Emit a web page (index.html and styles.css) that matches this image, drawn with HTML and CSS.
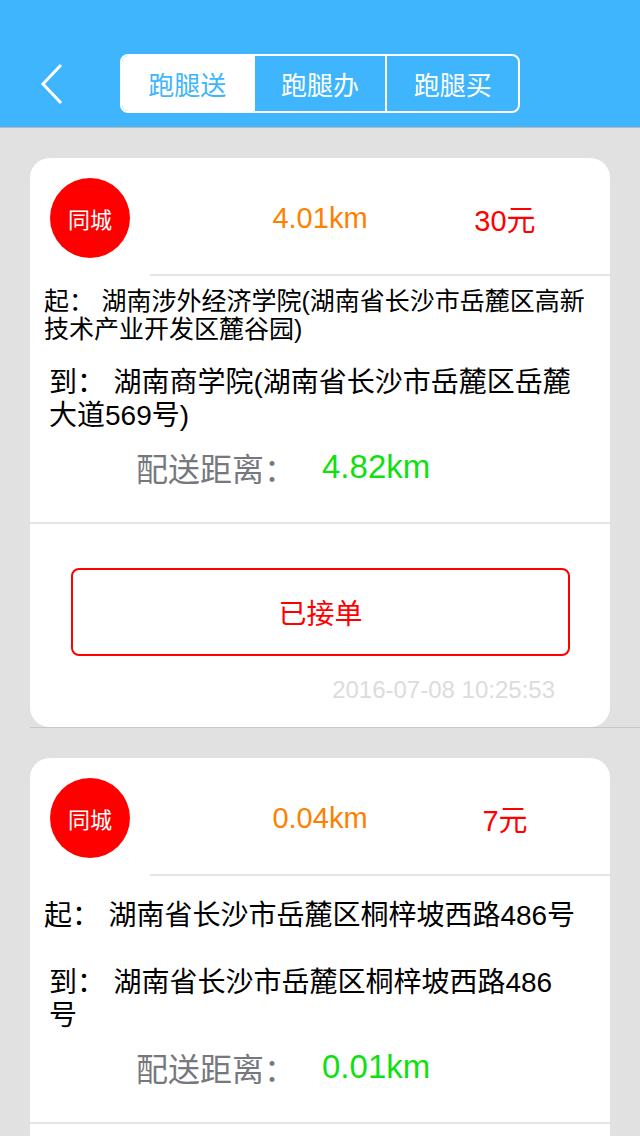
FILE: index.html
```html
<!DOCTYPE html>
<html lang="zh-CN">
<head>
<meta charset="utf-8">
<title>跑腿送</title>
<link rel="stylesheet" href="styles.css">
</head>
<body>
<header class="nav">
  <div class="nav-left">
    <svg class="back" width="24" height="42" viewBox="0 0 24 42"><path d="M21 2 L3 21 L21 40" fill="none" stroke="#fff" stroke-width="3"/></svg>
  </div>
  <div class="seg">
    <div class="seg-item active">跑腿送</div>
    <div class="seg-item">跑腿办</div>
    <div class="seg-item">跑腿买</div>
  </div>
  <div></div>
</header>

<main class="list">
  <section class="cell">
    <div class="card">
      <div class="top">
        <div class="badge">同城</div>
        <div class="dist">4.01km</div>
        <div class="price">30元</div>
      </div>
      <div class="rule-short"></div>
      <div class="row row-from">
        <p class="addr from small"><span class="lbl">起：</span>湖南涉外经济学院(湖南省长沙市岳麓区高新技术产业开发区麓谷园)</p>
      </div>
      <div class="row row-to">
        <p class="addr to"><span class="lbl">到：</span>湖南商学院(湖南省长沙市岳麓区岳麓大道569号)</p>
      </div>
      <div class="row row-km">
        <span class="km-lbl">配送距离：</span><span class="km-val">4.82km</span>
      </div>
      <div class="rule-full"></div>
      <div class="btn">已接单</div>
      <div class="time">2016-07-08 10:25:53</div>
    </div>
  </section>

  <section class="cell">
    <div class="card">
      <div class="top">
        <div class="badge">同城</div>
        <div class="dist">0.04km</div>
        <div class="price">7元</div>
      </div>
      <div class="rule-short"></div>
      <div class="row row-from">
        <p class="addr from"><span class="lbl">起：</span>湖南省长沙市岳麓区桐梓坡西路486号</p>
      </div>
      <div class="row row-to">
        <p class="addr to"><span class="lbl">到：</span>湖南省长沙市岳麓区桐梓坡西路486号</p>
      </div>
      <div class="row row-km">
        <span class="km-lbl">配送距离：</span><span class="km-val">0.01km</span>
      </div>
      <div class="rule-full"></div>
      <div class="btn">已接单</div>
      <div class="time">2016-07-08 10:25:53</div>
    </div>
  </section>
</main>
</body>
</html>
```
FILE: styles.css
```css
* { box-sizing: border-box; }
html, body { margin: 0; padding: 0; }
body {
  width: 640px;
  background: #e1e1e1;
  font-family: "Liberation Sans", "Noto Sans CJK SC", sans-serif;
  color: #000;
  overflow: hidden;
}

.nav {
  height: 128px;
  padding-top: 40px;
  background: #3eb5fd;
  border-bottom: 1px solid #b9b9b9;
  display: grid;
  grid-template-columns: 120px 400px 120px;
  align-items: center;
}
.nav-left { padding-left: 40px; display: flex; align-items: center; }
.back { display: block; }

.seg {
  height: 59px;
  border: 2px solid #fff;
  border-radius: 8px;
  display: flex;
  overflow: hidden;
}
.seg-item {
  flex: 1;
  display: flex;
  align-items: center;
  justify-content: center;
  font-size: 26px;
  color: #fff;
  border-left: 2px solid #fff;
}
.seg-item:first-child { border-left: none; }
.seg-item.active { background: #fff; color: #3eb5fd; }

.list { display: flex; flex-direction: column; }
.cell {
  margin-left: 30px;
  padding-top: 30px;
  border-bottom: 1px solid #c8c8c8;
}
.card {
  margin-right: 30px;
  background: #fff;
  border-radius: 20px;
  padding-bottom: 23px;
}

.top {
  display: flex;
  align-items: center;
  padding: 20px 0 16px 20px;
}
.badge {
  width: 80px;
  height: 80px;
  border-radius: 50%;
  background: #ff0000;
  color: #fff;
  font-size: 22px;
  display: flex;
  align-items: center;
  justify-content: center;
}
.dist {
  width: 180px;
  margin-left: 100px;
  text-align: center;
  font-size: 29px;
  color: #ff8000;
}
.price {
  width: 190px;
  text-align: center;
  font-size: 29px;
  color: #ff0000;
}
.rule-short { height: 2px; margin-left: 120px; background: #e4e4e4; }
.rule-full { height: 2px; background: #e4e4e4; margin-top: 32px; }

.row { display: flex; align-items: center; }
.row-from { height: 78px; }
.row-to { height: 90px; }
.row-km { height: 46px; padding-left: 106px; }

.addr {
  margin: 0;
  font-size: 28px;
  line-height: 33px;
}
.addr .lbl { margin-right: 0.3em; }
.addr.from { padding-left: 14px; width: 567px; }
.addr.to { padding-left: 19px; width: 545px; }
.addr.small { font-size: 25px; line-height: 28px; }

.km-lbl { font-size: 32px; color: #77787d; }
.km-val { font-size: 33px; color: #10e010; margin-left: 26px; }

.btn {
  margin: 44px 40px 0 41px;
  height: 88px;
  border: 2px solid #ff0000;
  border-radius: 8px;
  color: #ff0000;
  font-size: 28px;
  display: flex;
  align-items: center;
  justify-content: center;
}
.time {
  margin-top: 20px;
  padding-right: 55px;
  text-align: right;
  font-size: 24px;
  line-height: 28px;
  color: #dcdcdc;
}
```
